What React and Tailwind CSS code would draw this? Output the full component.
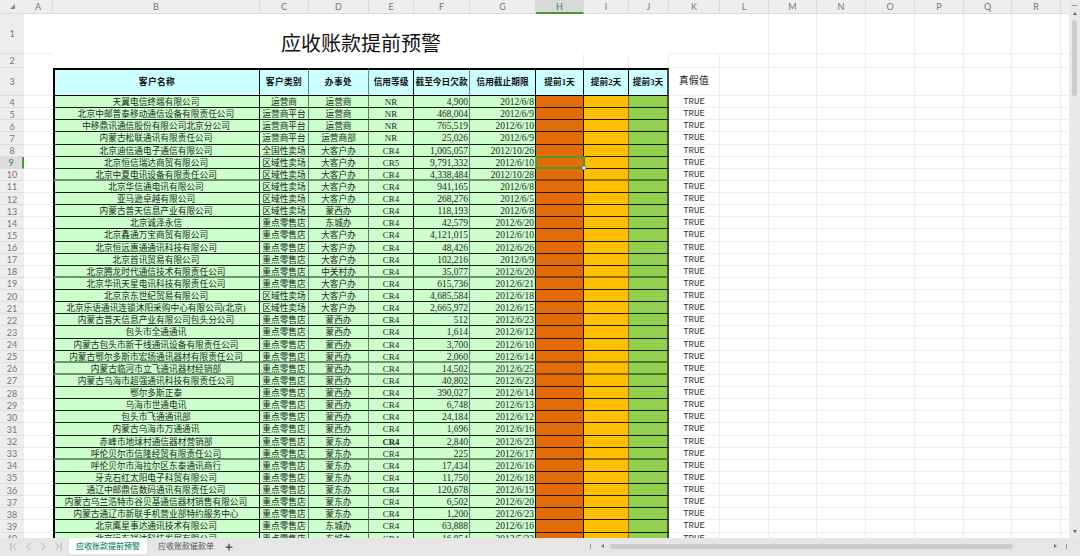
import React from "react";
import { ChevronLeft, ChevronRight, ChevronFirst, ChevronLast, Plus } from "lucide-react";

const cols =
  "grid grid-rows-[minmax(0,1fr)] grid-cols-[24px_29px_207px_49px_60px_45px_56px_66px_48px_45px_40px_51px_49px_48px_49px_49px_49px_48px_49px_9px]";
const cjk = "font-['Liberation_Serif','Noto_Sans_CJK_SC',serif]";
const ui = "font-['Lato','Noto_Sans_CJK_SC',sans-serif]";

const letters = "ABCDEFGHIJKLMNOPQR".split("");
const soft = [10, 18, 25, 26, 33];

const rows = [
  ["天翼电信终端有限公司", "运营商", "运营商", "NR", "4,900", "2012/6/8"],
  ["北京中邮普泰移动通信设备有限责任公司", "运营商平台", "运营商", "NR", "468,004", "2012/6/9"],
  ["中移鼎讯通信股份有限公司北京分公司", "运营商平台", "运营商", "NR", "765,519", "2012/6/10"],
  ["内蒙古松联通讯有限责任公司", "运营商平台", "运营商部", "NR", "25,026", "2012/6/9"],
  ["北京迪信通电子通信有限公司", "全国性卖场", "大客户办", "CR4", "1,005,057", "2012/10/26"],
  ["北京恒信瑞达商贸有限公司", "区域性卖场", "大客户办", "CR5", "9,791,332", "2012/6/10"],
  ["北京中夏电讯设备有限责任公司", "区域性卖场", "大客户办", "CR4", "4,338,484", "2012/10/28"],
  ["北京华信通电讯有限公司", "区域性卖场", "大客户办", "CR4", "941,165", "2012/6/8"],
  ["亚马逊卓越有限公司", "区域性卖场", "大客户办", "CR4", "268,276", "2012/6/5"],
  ["内蒙古普天信息产业有限公司", "区域性卖场", "蒙西办", "CR4", "118,193", "2012/6/8"],
  ["北京诚泽永信", "重点零售店", "东城办", "CR4", "42,579", "2012/6/20"],
  ["北京鑫通万宝商贸有限公司", "重点零售店", "大客户办", "CR4", "4,121,015", "2012/6/10"],
  ["北京恒远惠通通讯科技有限公司", "重点零售店", "大客户办", "CR4", "48,426", "2012/6/26"],
  ["北京首讯贸易有限公司", "重点零售店", "大客户办", "CR4", "102,216", "2012/6/9"],
  ["北京腾龙时代通信技术有限责任公司", "重点零售店", "中关村办", "CR4", "35,077", "2012/6/20"],
  ["北京华讯天星电讯科技有限责任公司", "重点零售店", "大客户办", "CR4", "615,736", "2012/6/21"],
  ["北京京东世纪贸易有限公司", "区域性卖场", "大客户办", "CR4", "4,685,584", "2012/6/18"],
  ["北京乐语通讯连锁沐阳采购中心有限公司(北京)", "区域性卖场", "大客户办", "CR4", "2,665,972", "2012/6/15"],
  ["内蒙古普天信息产业有限公司包头分公司", "重点零售店", "蒙西办", "CR4", "512", "2012/6/23"],
  ["包头市全通通讯", "重点零售店", "蒙西办", "CR4", "1,614", "2012/6/12"],
  ["内蒙古包头市新干线通讯设备有限责任公司", "重点零售店", "蒙西办", "CR4", "3,700", "2012/6/10"],
  ["内蒙古鄂尔多斯市宏扬通讯器材有限责任公司", "重点零售店", "蒙西办", "CR4", "2,060", "2012/6/14"],
  ["内蒙古临河市立飞通讯器材经销部", "重点零售店", "蒙西办", "CR4", "14,502", "2012/6/25"],
  ["内蒙古乌海市超强通讯科技有限责任公司", "重点零售店", "蒙西办", "CR4", "40,802", "2012/6/23"],
  ["鄂尔多斯正泰", "重点零售店", "蒙西办", "CR4", "390,027", "2012/6/14"],
  ["乌海市世通电讯", "重点零售店", "蒙西办", "CR4", "6,748", "2012/6/13"],
  ["包头市飞通通讯部", "重点零售店", "蒙西办", "CR4", "24,184", "2012/6/12"],
  ["内蒙古乌海市万通通讯", "重点零售店", "蒙西办", "CR4", "1,696", "2012/6/16"],
  ["赤峰市地球村通信器材营销部", "重点零售店", "蒙东办", "CR4", "2,840", "2012/6/23"],
  ["呼伦贝尔市信隆经贸有限责任公司", "重点零售店", "蒙东办", "CR4", "225", "2012/6/17"],
  ["呼伦贝尔市海拉尔区东泰通讯商行", "重点零售店", "蒙东办", "CR4", "17,434", "2012/6/16"],
  ["牙克石红太阳电子科贸有限公司", "重点零售店", "蒙东办", "CR4", "11,750", "2012/6/18"],
  ["通辽中邮鼎信数码通讯有限责任公司", "重点零售店", "蒙东办", "CR4", "120,678", "2012/6/19"],
  ["内蒙古乌兰浩特市谷贝基通信器材销售有限公司", "重点零售店", "蒙东办", "CR4", "6,502", "2012/6/20"],
  ["内蒙古通辽市新联手机营业部特约服务中心", "重点零售店", "蒙东办", "CR4", "1,200", "2012/6/23"],
  ["北京鹰星事达通讯技术有限公司", "重点零售店", "东城办", "CR4", "63,888", "2012/6/16"],
  ["北京远东祥达科技发展有限公司", "重点零售店", "东城办", "CR4", "16,854", "2012/5/22"],
];

const headers = [
  ["客户名称", "border-r-black tracking-[0.4px]"],
  ["客户类别", "border-r-[#5f8a8c] tracking-[0.4px]"],
  ["办事处", "border-r-[#5f8a8c] tracking-[0.4px]"],
  ["信用等级", "border-r-black"],
  ["截至今日欠款", "border-r-[#5f8a8c]"],
  ["信用截止期限", "border-r-black"],
  ["提前1天", "border-r-black"],
  ["提前2天", "border-r-black"],
  ["提前3天", "border-r-[#44503a] border-r-2"],
];

const RowHead = ({ n, active, className = "" }) => (
  <div
    className={`${ui} flex items-center justify-center border-b border-[#dddddd] text-[9px] leading-none ${
      active ? "bg-[#dcdcdc] text-[#2f8a4a] border-r-2 border-r-[#4b9a2e]" : "bg-[#eeeeee] text-[#777777]"
    } ${className}`}
  >
    {n}
  </div>
);

const Blank = ({ className = "" }) => <div className={`border-r border-b border-[#eeeeee] ${className}`} />;

// L to the stub column are all empty grid cells
const RightBlanks = () =>
  Array.from({ length: 8 }).map((_, i) => <Blank key={i} />);

const DataRow = ({ n, row }) => {
  const [name, type, office, grade, owed, date] = row;
  const line = soft.includes(n) ? "border-b-2 border-b-[#00000070]" : "border-b border-b-[#1a1a1a]";
  const cell = `${line} border-r overflow-hidden whitespace-nowrap pt-px text-[8.7px] leading-[11px] text-[#1d2a1d] bg-[#ccffcc] ${cjk}`;
  return (
    <div className={`${cols} h-[12.14px]`}>
      <RowHead n={n} active={n === 9} className="pt-px" />
      <Blank className="border-r-0" />
      <div className={`${cell} border-l-2 border-l-black border-r-black pr-[2px] text-center`}>{name}</div>
      <div className={`${cell} border-r-[#5f7f6a] text-center`}>{type}</div>
      <div className={`${cell} border-r-[#5f7f6a] text-center`}>{office}</div>
      <div
        className={`${cell} border-r-black text-center ${
          n === 32 ? "text-[7.5px] font-bold" : "text-[9px]"
        }`}
      >
        {grade}
      </div>
      <div className={`${cell} border-r-[#5f7f6a] text-right pr-px text-[9.5px]`}>{owed}</div>
      <div className={`${cell} border-r-black text-right pr-px text-[9.5px]`}>{date}</div>
      <div className={`${line} relative border-r border-r-black bg-[#e36c09]`}>
        {n === 9 && (
          <div className="absolute -left-px -right-[2px] -top-px -bottom-px z-10 border-2 border-[#4b9a2e]">
            <div className="absolute -right-[3px] -bottom-[3px] h-[4px] w-[4px] border border-[#999999] bg-white" />
          </div>
        )}
      </div>
      <div className={`${line} border-r border-r-[#8a6a20] bg-[#ffc000]`} />
      <div className={`${line} border-r-2 border-r-[#44503a] bg-[#92d050]`} />
      <div className="overflow-hidden border-r border-b border-[#eeeeee] pt-px text-center font-['Liberation_Mono',monospace] text-[9px] leading-[11px] text-[#333333]">
        TRUE
      </div>
      <RightBlanks />
    </div>
  );
};

const App = () => {
  return (
    <div className="flex h-[556px] w-[1080px] flex-col overflow-hidden bg-white">
      <div className="flex min-h-0 flex-1">
        {/* sheet */}
        <div className="w-[1069px] overflow-hidden">
          <div className={`${cols} h-[14px] bg-[#eeeeee]`}>
            <div className="flex items-center justify-center border-b border-[#dddddd]">
              <div className="h-0 w-0 border-b-[5px] border-l-[5px] border-b-[#888888] border-l-transparent" />
            </div>
            {letters.map((l) => (
              <div
                key={l}
                className={`${ui} flex items-center justify-center border-r text-[9px] leading-none ${
                  l === "H"
                    ? "border-b-2 border-r-[#dddddd] border-b-[#4b9a2e] bg-[#d9d9d9] text-[#2f8a4a]"
                    : "border-b border-[#dddddd] text-[#777777]"
                }`}
              >
                {l}
              </div>
            ))}
            <div className="border-b border-[#dddddd]" />
          </div>

          <div className={`${cols} h-[40px]`}>
            <RowHead n={1} />
            <div className="border-b border-[#eeeeee]" />
            <div className={`${cjk} col-span-9 flex items-end justify-center text-[20px] leading-[20px] text-[#111111]`}>
              应收账款提前预警
            </div>
            <Blank className="border-r-0" />
            <RightBlanks />
          </div>

          <div className={`${cols} h-[14px]`}>
            <RowHead n={2} />
            <div />
            <div className="col-span-6" />
            <div className="border-r border-[#eeeeee]" />
            <div className="border-r border-[#eeeeee]" />
            <div className="border-r border-[#eeeeee]" />
            <Blank />
            <RightBlanks />
          </div>

          <div className={`${cols} h-[28px]`}>
            <RowHead n={3} />
            <Blank className="border-r-0" />
            {headers.map(([label, extra], i) => (
              <div
                key={label}
                className={`${cjk} flex items-center justify-center overflow-hidden whitespace-nowrap border-t-2 border-t-black border-b border-b-black border-r bg-[#ccffff] text-[8.7px] font-bold text-[#111111] ${extra} ${
                  i === 0 ? "border-l-2 border-l-black" : ""
                }`}
              >
                {label}
              </div>
            ))}
            <div className={`${cjk} flex items-center justify-center border-r border-b border-[#eeeeee] text-[9.7px] tracking-[0.3px] text-[#222222]`}>
              真假值
            </div>
            <RightBlanks />
          </div>

          {rows.map((row, i) => (
            <DataRow key={i} n={i + 4} row={row} />
          ))}
        </div>

        {/* vertical scrollbar */}
        <div className="flex w-[11px] flex-col items-center bg-[#e9e9e9] pt-[4px]">
          <div className="mt-[1px] h-px w-[5px] bg-[#999999]" />
          <div className="mt-[6px] h-0 w-0 border-x-[2.5px] border-b-[3px] border-x-transparent border-b-[#666666]" />
          <div className="mt-[5px] h-[76px] w-[5px] rounded-full bg-[#cccccc]" />
          <div className="mt-auto mb-[5px] h-0 w-0 border-x-[2.5px] border-t-[3px] border-x-transparent border-t-[#666666]" />
        </div>
      </div>

      {/* sheet tabs */}
      <div className={`${ui} flex h-[18px] items-start bg-[#e6e6e6] text-[8px] leading-none`}>
        <div className="flex h-[16px] w-[69px] items-center gap-[1px] pl-[7px] text-[#a8a8a8]">
          <ChevronFirst size={13} strokeWidth={1.5} />
          <ChevronLeft size={13} strokeWidth={1.5} className="ml-[1px]" />
          <ChevronRight size={13} strokeWidth={1.5} className="ml-[1px]" />
          <ChevronLast size={13} strokeWidth={1.5} className="ml-[1px]" />
        </div>
        <div className="flex h-[16px] w-[78px] items-center justify-center rounded-b-[3px] bg-white font-medium text-[#1f8a70]">
          应收账款提前预警
        </div>
        <div className="ml-[11px] flex h-[16px] w-[56px] items-center justify-center text-[#555555]">应收账款催款单</div>
        <Plus size={10} strokeWidth={3} className="ml-[10px] mt-[4px] text-[#444444]" />

        <div className="ml-auto flex h-[16px] items-center pr-[13px]">
          <div className="h-[5px] w-px bg-[#999999]" />
          <div className="ml-[10px] h-0 w-0 border-y-[2.5px] border-r-[3px] border-y-transparent border-r-[#777777]" />
          <div className="ml-[6px] h-[5px] w-[403px] rounded-full bg-[#cccccc]" />
          <div className="ml-[41px] h-0 w-0 border-y-[2.5px] border-l-[3px] border-y-transparent border-l-[#777777]" />
          <div className="ml-[9px] h-[5px] w-px bg-[#999999]" />
        </div>
      </div>
    </div>
  );
};

export default App;
